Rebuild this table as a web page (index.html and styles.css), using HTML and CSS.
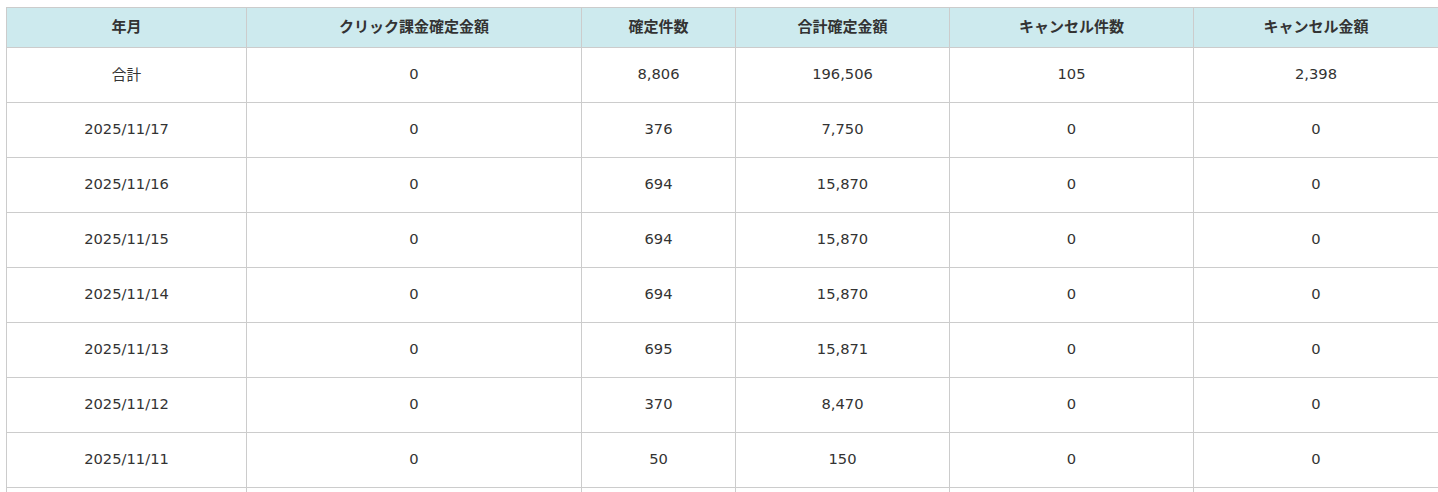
FILE: index.html
```html
<!DOCTYPE html>
<html lang="ja">
<head>
<meta charset="utf-8">
<link rel="stylesheet" href="styles.css">
</head>
<body>
<table class="report">
  <colgroup>
    <col class="c1"><col class="c2"><col class="c3"><col class="c4"><col class="c5"><col class="c6">
  </colgroup>
  <thead>
    <tr><th>年月</th><th>クリック課金確定金額</th><th>確定件数</th><th>合計確定金額</th><th>キャンセル件数</th><th>キャンセル金額</th></tr>
  </thead>
  <tbody>
    <tr><td>合計</td><td>0</td><td>8,806</td><td>196,506</td><td>105</td><td>2,398</td></tr>
    <tr><td>2025/11/17</td><td>0</td><td>376</td><td>7,750</td><td>0</td><td>0</td></tr>
    <tr><td>2025/11/16</td><td>0</td><td>694</td><td>15,870</td><td>0</td><td>0</td></tr>
    <tr><td>2025/11/15</td><td>0</td><td>694</td><td>15,870</td><td>0</td><td>0</td></tr>
    <tr><td>2025/11/14</td><td>0</td><td>694</td><td>15,870</td><td>0</td><td>0</td></tr>
    <tr><td>2025/11/13</td><td>0</td><td>695</td><td>15,871</td><td>0</td><td>0</td></tr>
    <tr><td>2025/11/12</td><td>0</td><td>370</td><td>8,470</td><td>0</td><td>0</td></tr>
    <tr><td>2025/11/11</td><td>0</td><td>50</td><td>150</td><td>0</td><td>0</td></tr>
    <tr><td></td><td></td><td></td><td></td><td></td><td></td></tr>
  </tbody>
</table>
</body>
</html>
```
FILE: styles.css
```css
html, body {
  margin: 0;
  padding: 0;
  background: #fff;
}
body {
  padding: 7px 0 0 6px;
  font-family: "DejaVu Sans", "Noto Sans CJK JP", sans-serif;
  color: #333;
  font-size: 14.7px;
}
.report {
  border-collapse: collapse;
  table-layout: fixed;
  width: 1432px;
}
.c1 { width: 240px; }
.c2 { width: 335px; }
.c3 { width: 154px; }
.c4 { width: 214px; }
.c5 { width: 244px; }
.c6 { width: 245px; }
.report th,
.report td {
  border: 1px solid #ccc;
  text-align: center;
  vertical-align: middle;
  padding: 0;
}
.report th {
  background: #cdeaee;
  height: 35px;
  padding-bottom: 4px;
  font-family: "Noto Sans CJK JP", sans-serif;
  font-weight: 700;
  font-size: 15px;
  color: #333;
}
.report td {
  height: 50px;
  padding-bottom: 4px;
  font-size: 14.7px;
}
```
